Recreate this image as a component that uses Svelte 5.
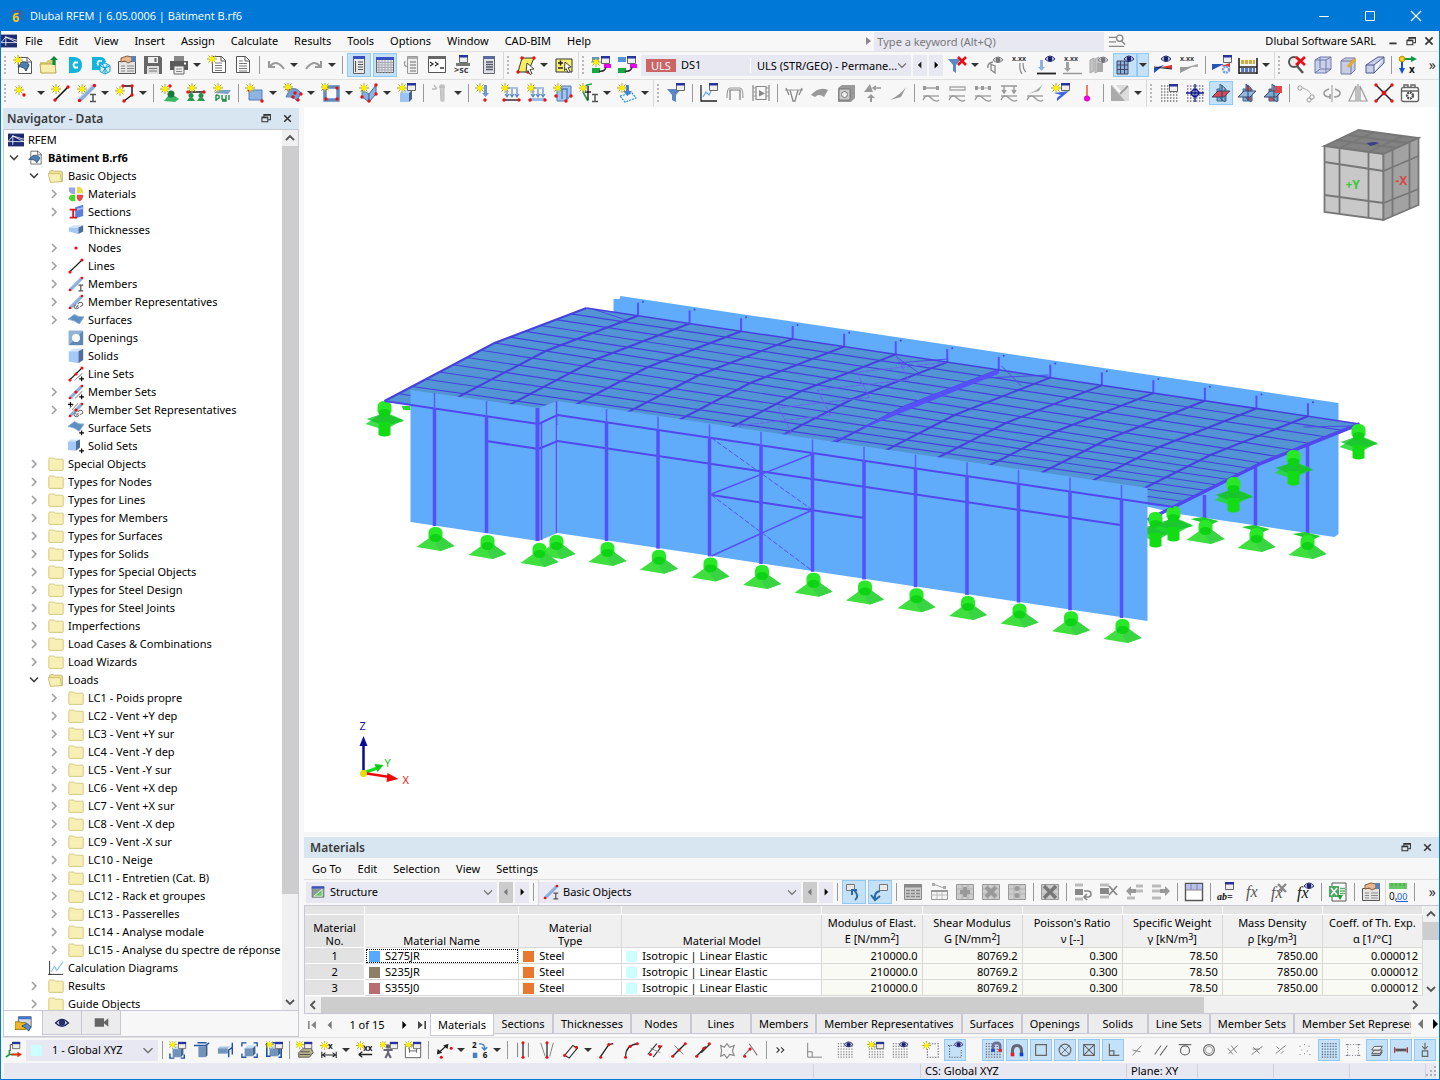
<script lang="ts">
  type Tool = { icon: string; active: boolean; drop: boolean };
  type TreeItem = { depth: number; icon: string; label: string; state?: 'open' | 'closed'; bold?: boolean };
  type Point = [number, number];

  // Small building blocks shared by the toolbar icons, all on a 20 x 20 grid
  const star = (x = 5, y = 5) =>
    `<g transform="translate(${x} ${y})"><path d="M-5 0H5M0-5V5M-3.5-3.5l7 7M3.5-3.5l-7 7" stroke="#a8a030" stroke-width="1"/><path d="M0-4 1-1.5 3.5-2.5 2 0 3.5 2.5 1 1.5 0 4-1 1.5-3.5 2.5-2 0-3.5-2.5-1-1.5Z" fill="#fff000"/><circle r="2" fill="#fff000"/></g>`;
  const dot = (x: number, y: number, r = 1.7) => `<circle cx="${x}" cy="${y}" r="${r}" fill="#e81018"/>`;
  const line = (d: string, color = '#222', width = 1.2) =>
    `<path d="${d}" fill="none" stroke="${color}" stroke-width="${width}"/>`;
  const fill = (d: string, color: string, stroke = 'none') => `<path d="${d}" fill="${color}" stroke="${stroke}"/>`;
  const win = (x = 11, y = 1) =>
    `<g transform="translate(${x} ${y})"><path d="M.5 .5h8v7h-8z" fill="#eee" stroke="#666"/><path d="M0 0h9v2.5H0z" fill="#26339c"/></g>`;
  const eye = (x = 13, y = 5, c = '#1c2470') =>
    `<g transform="translate(${x} ${y})"><path d="M-5 0Q0-6 5 0Q0 5-5 0Z" fill="#dde" stroke="${c}"/><circle r="2.4" fill="${c}"/></g>`;
  const text = (t: string, x: number, y: number, size = 7, color = '#444') =>
    `<text x="${x}" y="${y}" font-size="${size}" font-weight="700" font-family="Noto Sans, sans-serif" fill="${color}">${t}</text>`;
  const page = (x = 3, y = 2) => `<path d="M${x + 0.5} ${y + 0.5}h9l4 4v12h-13z" fill="#fff" stroke="#555"/>` + line(`M${x + 9} ${y}v5h5`, '#555', 1);
  const cube = (x: number, y: number, c = '#8fb4e8') =>
    `<g transform="translate(${x} ${y})"><path d="M0 4h9v9H0z" fill="${c}"/><path d="M0 4 3 1h9L9 4z" fill="#c4dcf8"/><path d="M9 4l3-3v9l-3 3z" fill="#44648f"/></g>`;
  const beam = line('M3 17 17 3', '#8aaedb', 4) + line('M2 16 16 2', '#b4cdee', 1) + dot(2.5, 17.5) + dot(17.5, 2.5);
  const ibeam = line('M13 11.5h6M13 18.5h6M16 11.5v7', '#555', 1.5);
  const wave = (c = '#888') => line('M2 13h16', c, 1.3) + line('M2 17Q5 10 10 15T18 17', c, 1.4);
  const dots = (c = '#667') => {
    let out = '';
    for (let y = 3; y < 19; y += 3) for (let x = 2; x < 19; x += 3) out += `M${x} ${y}h1.4`;
    return line(out, c, 1.4);
  };
  const frameWin = (c = '#fff') => `<path d="M1.5 2.5h17v15h-17z" fill="${c}" stroke="#666"/><path d="M1 2h18v3H1z" fill="#3a4fc0"/>`;
  const disabledTable = `<path d="M1.5 2.5h17v15h-17z" fill="#ccc" stroke="#999"/>` + line('M2 7h16M2 12h16M7 3v14M13 3v14', '#b4b4b4', 1);
  const planes = (flat: string, side: string, front: string) =>
    fill('M6 6h9v12H6z', front, '#3c6890') + fill('M9 1l5 4v14l-5-4z', side, '#3c6890') + fill('M1 14 7 8h12l-6 6z', flat, '#3c4870') + line('M11 2v16', '#26496e', 1);
  const chain = line('M10 17l3-3M12 12.5q4-4 6-1t-3 4M14 16q-3 4-5.500 1.500t2-4', '#666', 1.3);
  const plus = (x = 14, y = 13) => line(`M${x} ${y + 3}h6M${x + 3} ${y}v6`, '#000', 1.5);
  const greenBase = (x: number) => fill(`M${x} 18l2-3h4l2 3z`, '#2a9a4c') + `<circle cx="${x + 4}" cy="12.500" r="2.500" fill="#229048"/>`;

  const icons: Record<string, string> = {
    newModel: page(5, 2) + fill('M5 12 9 7q5-1 7 3l-3 6q-2-5-8-4z', '#4f7fae', '#27486b') + star(5, 5),
    open: fill('M1 7h6l2-2h8v13H1z', '#d8cc74') + fill('M1 9h15l1 9H2z', '#f8eeb0', '#b8a850') + fill('M15 1l4 4h-2.500v5h-3V5H11z', '#0b8a3c'),
    cloud: fill('M4 2h6q7 1 7 8t-7 8H4z', '#12b4dc') + line('M13 7.500H9.500Q7.500 10 9.500 12.500H13', '#fff', 1.8),
    cloudModel: fill('M1 2h8q5 0 6 5L9 10v5H1z', '#12b4dc') + line('M11 6H7.500q-2 2 0 4.500', '#fff', 1.6) + fill('M14 8l5 2.500v6L14 19l-5-2.500v-6z', '#d8f2fa', '#12a0d0') + line('M9 10.500l5 3 5-3M14 13v6M11.500 9.500l5 8M16.500 9.500l-5 8', '#12a0d0', 1),
    settings: `<path d="M1.500 6.500h17v12h-17z" fill="#e4e4e4" stroke="#555"/>` + line('M4 11h4M10 11h7M4 13.500h4M10 13.500h7M4 16h4M10 16h7', '#888', 1.2) + fill('M4 3l6-2 5 1v4l-4 2-3-2-4 1z', '#e8b890', '#8a5a3a') + fill('M14 1h5v6h-4z', '#5a80b8'),
    save: fill('M1 1h16l2 2v16H1z', '#666') + fill('M5 2h10v6H5z', '#eee') + fill('M4 11h12v8H4z', '#ddd') + line('M6 13.500h8M6 16h8', '#777', 1) + fill('M11.500 3h2v4h-2z', '#666'),
    print: fill('M5 1h10v5H5z', '#888') + fill('M1 6h18v9H1z', '#5a5a5a') + fill('M5 11h10v8H5z', '#eee', '#666') + line('M7 14h6M7 16.500h6', '#888', 1) + fill('M15 7.500h2v2h-2z', '#fff'),
    newReport: page(5, 1) + line('M8 8h7M8 10.500h7M8 13h7M8 15.500h7', '#777', 1) + star(5, 4),
    report: page(3, 1) + line('M6 6h4M6 8.500h8M6 11h8M6 13.500h8M6 16h8', '#777', 1),
    undo: line('M3 6v6h6M4 11q7-7 14 3', '#999', 2),
    redo: line('M17 6v6h-6M16 11Q9 4 2 14', '#999', 2),
    panelList: `<path d="M4.500 1.500h11v17h-11z" fill="#e8e8e8" stroke="#666"/><path d="M4 1h12v3H4z" fill="#3a4fc0"/>` + line('M9 7h5M9 9.500h5M9 12h5M9 14.500h5', '#555', 1.2) + line('M6.500 6v11', '#555', 1),
    panelTable: frameWin('#e4e6f0') + line('M4 5v13M7 5v13M10 5v13M13 5v13M16 5v13M2 7.500h16M2 10h16M2 12.500h16M2 15h16', '#a8a8b0', 1),
    panelGrey: `<path d="M6.500 1.500h10v17h-10z" fill="#eee" stroke="#999"/>` + line('M7 3h9M9 7h6M9 10h6M9 13h6M9 16h6M4 6q-2 5 3 6', '#999', 1.4),
    console: `<path d="M1.500 1.500h17v16h-17z" fill="#fff" stroke="#555"/><path d="M1 1h18v3H1z" fill="#666"/>` + line('M3 7l3 2-3 2M8 7l3 2-3 2M13 13h4', '#333', 1.4),
    script: win(6, 0) + `<path d="M3 8h14v3H3z" fill="#777"/>` + text('>sc', 1, 18, 9, '#444'),
    panelPlain: `<path d="M4.500 1.500h11v17h-11z" fill="#dde2ea" stroke="#666"/><path d="M4 1h12v3H4z" fill="#5a6a9a"/>` + line('M7 7h7M7 9.500h7M7 12h7M7 14.500h7', '#556', 1.4),
    selectArea: fill('M6 3h12l-6 14H2z', '#f4ee60', '#333') + dot(6, 3) + dot(18, 3) + dot(2, 17) + dot(12, 17) + fill('M11 8l7 6-4 .5 2 4-2 1-2-4-2 2z', '#fff', '#444'),
    selectBox: fill('M2 4h16v13H2z', '#f8f070', '#333') + line('M4 8h5M6.500 5.500v5M4 13h5', '#222', 1.5) + fill('M11 7l6 5-3 .5 2 4-2 1-2-4-1.500 2z', '#fff', '#444'),
    lcNew: fill('M1 2h7v5H1z', '#5590d8') + fill('M1 13h8v5H1z', '#18a840') + star(5, 7) + win(10, 1) + fill('M13 9h7v4h-7z', '#f000f0') + line('M8 16q6 1 7-4', '#333', 1.5),
    lcEdit: fill('M1 2h8v5H1z', '#5590d8') + fill('M1 13h8v5H1z', '#18a840') + win(10, 1) + fill('M13 9h7v4h-7z', '#f000f0') + line('M8 16q6 1 7-4', '#333', 1.5),
    filterX: fill('M1 4h13L9 10v8l-3-2v-6z', '#5b87c4') + line('M11 2l8 8M19 2l-8 8', '#e81018', 2.6),
    deformEye: line('M8 7Q2 8 3 13M5 9l5 2v7l-4-3v-5', '#888', 1.3) + eye(13, 5, '#777'),
    valuesWave: text('x.xx', 1, 6, 7) + line('M9 8q-1 7 2 11M12 8q0 7 3 9', '#888', 1.2),
    loadEye: fill('M3 5h3v7h2l-3.500 4L1 12h2z', '#8fb4e0') + line('M0 18.500h19', '#222', 1.8) + eye(13, 4),
    loadValues: text('x.xx', 1, 6, 7) + fill('M3 7h3v6h2l-3.500 4L1 13h2z', '#a0a0a0') + line('M0 18.500h19', '#999', 1.5),
    boxesEye: fill('M1 5l4-2v13l-4 2zM6 4l4-2v14l-4 2z', '#c4c4c4', '#aaa') + fill('M8 8h6v9H8z', '#aaa') + eye(14, 5, '#777'),
    meshEye: fill('M2 6h11v13H2z', '#88b4dc', '#446') + line('M2 10h11M2 14.500h11M5.500 6v13M9.500 6v13', '#446', 1) + eye(14, 4),
    resultEye: fill('M1 18v-5l10-3z', '#2050b0') + fill('M8 12l11-2v4z', '#e03028') + line('M1 12l18 2', '#223', 1) + eye(13, 4),
    resultValues: text('x.xx', 1, 6, 7) + fill('M1 18V12h12z', '#999') + fill('M8 12h11V9z', '#aaa'),
    resultGear: fill('M0 9h12l-12 6z', '#2454b4') + fill('M9 11l9-3v4z', '#e03028') + win(11, 0) + `<circle cx="14" cy="14.500" r="3" fill="#fff" stroke="#7a9ae0" stroke-width="2.500" stroke-dasharray="2 .8"/>`,
    abacus: line('M1 3v16M19 3v16M1 12h18M1 18h18', '#222', 1.6) + `<path d="M3 7h14" stroke="#c8b048" stroke-width="4" stroke-dasharray="3.200 .8"/><path d="M3 15h14" stroke="#5878c4" stroke-width="4" stroke-dasharray="3.200 .8"/>`,
    zoomX: `<circle cx="7" cy="7" r="5" fill="#eee" stroke="#555" stroke-width="2"/>` + line('M10 11l6 7', '#555', 2.5) + line('M9 2l9 8M18 2l-9 8', '#e81018', 2.8),
    wireCube: fill('M2 5l5-3h11v12l-5 4H2z', '#c8d0ec', '#7078a8') + line('M2 5h11v13M13 5l5-3M7 2v11M2 18l5-4h11', '#7078a8', 1),
    editCube: fill('M2 6l4-3h10v12l-4 4H2z', '#c8cce4', '#7078a8') + line('M2 6h10v13M12 6l4-3', '#7078a8', 1) + line('M9 12l7-8', '#e8a828', 3),
    perspective: fill('M1 10h8v8H1zM1 10 13 2h6L9 10M19 2v6L9 18', '#c8d0ec', '#505890'),
    viewX: line('M4 4h10', '#0a9a48', 2) + line('M4 4v10', '#1450e0', 2) + fill('M13 1l6 3-6 3z', '#0a9a48') + fill('M1 13h6l-3 6z', '#1450e0') + `<circle cx="4" cy="4" r="2.800" fill="#f8d020" stroke="#c80"/>` + text('x', 11, 18, 10, '#111'),
    more: line('M4 7l3 3-3 3M9 7l3 3-3 3', '#333', 1.2),

    node: star(6, 7) + dot(11, 12),
    line: line('M4 17 17 4', '#111', 1.6) + dot(4, 17) + dot(17, 4) + star(5, 6),
    member: beam + ibeam + star(5, 6),
    polyline: line('M8 3h9v9l-8 6', '#111', 1.4) + dot(8, 3) + dot(17, 3) + dot(17, 12) + dot(9, 18) + star(5, 8),
    nodeSupport: fill('M4 18l4-5h7l4 3-4 3z', '#38b860') + `<circle cx="11" cy="11" r="3.500" fill="#187838"/>` + dot(10, 3) + star(5, 6),
    lineSupport: greenBase(1) + greenBase(11) + line('M2 9h16', '#111', 1.4) + dot(2, 9) + dot(18, 9) + star(6, 5),
    surfaceSupport: fill('M2 10 6 7h13l-3 4z', '#7aa2cc') + line('M4 12v6M4 12q4 0 3 3l-3 2M10 12v4q4 2 4-1v-3M14 14v4h-4M17 12v5', '#229048', 1.4) + star(6, 5),
    surface: fill('M4 7h13v10H4z', '#8fb4e4', '#557fb4') + dot(4, 7) + dot(17, 18) + star(5, 5),
    surfaceCurved: fill('M3 14l4-8q7-2 11 4l-4 8q-4-5-11-4z', '#6f9fd0', '#557fb4') + dot(5, 6) + dot(12, 10) + dot(18, 11) + dot(10, 14) + dot(15, 17) + star(5, 4),
    opening: `<path d="M4 4h13v13H4z" fill="#fff" stroke="#5e8cc0" stroke-width="3.500"/>` + dot(5, 5) + dot(16, 5) + dot(5, 16) + dot(16, 16) + star(4, 4),
    solid: fill('M3 7l7 4v8l-7-5z', '#7fb0e0', '#557fb4') + fill('M10 11l7-9v9l-7 8z', '#8fb4e4', '#45658f') + dot(17, 2) + dot(10, 18) + dot(3, 14) + dot(17, 11) + star(5, 5),
    solidBox: cube(3, 6, '#9cc4f0') + win(10, 0) + star(5, 5),
    greyPen: fill('M10 2h4v16h-3z', '#ccc', '#bbb') + line('M4 2l3 4M2 6h4M9 4h6', '#bbb', 1.4),
    nodeLoad: fill('M9 2h3v8h2l-3.500 4L7 10h2z', '#6a98d8') + dot(10, 17) + star(5, 5),
    memberLoad: line('M2 5h15M6 6v7M11 6v7M16 6v7M4 11l2 3 2-3M9 11l2 3 2-3M14 11l2 3 2-3', '#5a88c8', 1.2) + line('M3 17h15', '#222', 1.4) + dot(3, 17) + dot(18, 17) + star(4, 5),
    lineLoad: line('M2 5h15M6 6v7M11 6v7M16 6v7M4 11l2 3 2-3M9 11l2 3 2-3M14 11l2 3 2-3', '#5a88c8', 1.2) + line('M3 16.500h15', '#9cbce8', 3) + dot(3, 17) + dot(18, 17) + star(4, 5),
    surfaceLoad: fill('M4 6l5-3h9v9l-5 6H4z', '#a4c4ec', '#4f7fb8') + line('M5 6h9v10M9 6v10', '#4478c4', 1.3) + dot(3, 13) + dot(13, 18) + dot(18, 13) + star(5, 5),
    imposed: line('M13 1Q2 2 5 11l4 7', '#10a040', 1.6) + line('M9 3v14M6 9h6', '#222', 1.4) + ibeam + star(4, 5),
    freeLoad: fill('M9 2h3v6h3l-4.500 5L6 8h3z', '#4a80d0') + `<path d="M3 13l12-3 4 5-11 4z" fill="none" stroke="#2090e0" stroke-width="1.200" stroke-dasharray="2 1"/>` + star(5, 5),
    filterWin: fill('M1 6h14l-5 6v7l-4-2v-5z', '#5b87c4') + win(10, 0),
    diagram: line('M2 2v16h16', '#222', 1.3) + line('M4 14l3-5 3 3 4-8', '#60a8e8', 1.2) + win(10, 0),
    frame: line('M5 17V7h10v10', '#777', 1.2) + line('M2 15Q2 5 5 5h10q3 0 3 10', '#999', 1.2),
    film: line('M2 2v16M18 2v16M5 3.500h10v13H5z', '#888', 1.2) + line('M2 5h3M2 9h3M2 13h3M15 5h3M15 9h3M15 13h3', '#999', 1.2) + fill('M8 7l6 3.500-6 3z', '#888'),
    moment: line('M1 7h18', '#999', 1) + line('M2 5l3 7M6 7l3 11h2l3-11M18 5l-3 7', '#888', 1.3),
    surfaceGrey: fill('M1 12Q9 3 18 7l-4 7Q9 10 5 14z', '#999'),
    stress: fill('M2 5l4-3h13v13l-4 4H2z', '#999') + fill('M3 6h11v11H3z', '#ccc', '#777') + `<circle cx="8.500" cy="11.500" r="3" fill="#eee" stroke="#777"/>`,
    reactions: fill('M2 9l6-8 3 8zM8 19v-4H5l4-4 4 4h-3v4z', '#999') + line('M12 5h7M14 3l-3 2 3 2', '#999', 1.4),
    slope: fill('M2 17Q12 12 18 4l-5 10z', '#999'),
    diagA: line('M2 5h16', '#999', 1.4) + wave('#999') + fill('M2 3h3v4H2zM15 3h3v4h-3z', '#999'),
    diagB: line('M3 4h15v3H3z', '#aaa', 1.4) + wave('#999'),
    diagC: line('M2 5h16', '#aaa', 1) + fill('M2 3h3v4H2zM8 3h3v4H8zM15 3h3v4h-3z', '#999') + wave('#999'),
    diagD: line('M2 3h16M5 3v6M15 3v6M3 7l2 3 2-3M13 7l2 3 2-3', '#999', 1.4) + wave('#999'),
    diagE: fill('M3 11Q12 8 18 1l-4 7z', '#aaa') + wave('#999'),
    resultNew: fill('M3 10l15-2-12 10q-1-4 4-6z', '#3c62e0') + win(10, 0) + star(5, 5),
    thermo: line('M10 2v12', '#f06030', 1.6) + `<circle cx="10" cy="15.500" r="3" fill="#f000d8"/>`,
    render: fill('M1 2h18v16H1z', '#dcdcdc') + fill('M1 2v16h14z', '#aaa') + line('M4 2l7 8 8-8', '#fff', 2) + line('M10 11l8-8', '#999', 2),
    gridWin: dots('#777') + win(10, 1),
    gridCenter: dots('#778') + `<circle cx="10" cy="10" r="3.500" fill="none" stroke="#101890" stroke-width="1.500"/>` + line('M10 1v18M1 10h18', '#101890', 1.3),
    planeXY: planes('#d84850', '#8fb8dc', '#7aa8d0'),
    planeYZ: planes('#8fb8dc', '#d84850', '#7aa8d0'),
    planeXZ: planes('#7aa8d0', '#8fb8dc', '#e04850') + fill('M12 3h7v7h-7z', '#e04850'),
    copyNode: line('M7 5q6 2 8 6', '#aaa', 1) + `<circle cx="4" cy="5" r="2.200" fill="none" stroke="#999"/><circle cx="16" cy="14" r="2.200" fill="none" stroke="#999"/><circle cx="13" cy="17" r="2" fill="none" stroke="#999"/>`,
    rotate: line('M10 2v17', '#999', 1) + line('M7 6Q1 8 2 11t6 3M13 6q6 2 5 5t-6 3M8 11v5', '#999', 1.5),
    mirror: line('M8 3v15H1zM12 3v15h7zM10 1v18', '#999', 1.2),
    cross: line('M2 2 18 18M18 2 2 18', '#222', 1.5) + dot(2, 2) + dot(18, 2) + dot(2, 18) + dot(18, 18) + dot(10, 10, 2.4),
    bagGear: `<rect x="1.500" y="4.500" width="17" height="14" rx="2" fill="#fff" stroke="#666" stroke-width="1.400"/>` + line('M2 8h16M4 4V2h4v2M11 4V2h4v2', '#666', 1.4) + `<circle cx="10" cy="12.500" r="3" fill="none" stroke="#555" stroke-width="2.400" stroke-dasharray="2 .7"/>`,

    syncView: `<path d="M2.500 2.500h8v6h-8z" fill="#e8e8e8" stroke="#777"/>` + line('M11 18q5-4-1-10M8 13V8h5', '#2a6aa8', 2),
    syncTable: `<path d="M9.500 2.500h8v6h-8z" fill="#e8e8e8" stroke="#777"/>` + line('M10 9q-6 1-5 8M1 13l4 5 5-4', '#2a6aa8', 2),
    tableRows: `<path d="M1.500 2.500h17v15h-17z" fill="#ccc" stroke="#888"/>` + line('M1 4h18', '#888', 3) + line('M3 8.500h4M8 8.500h4M13 8.500h4M3 11.500h4M8 11.500h4M13 11.500h4M3 14.500h4M8 14.500h4M13 14.500h4', '#888', 1.4),
    tableEdit: `<path d="M2.500 8.500h16v9h-16z" fill="#f4f4f4" stroke="#999"/>` + line('M2 13h16M8 9v8M13 9v8', '#bbb', 1) + line('M2 9h17', '#999', 2) + line('M4 2l11 4', '#aaa', 1.2) + fill('M3 1h3v3H3zM14 4h3v3h-3z', '#aaa'),
    tablePlus: disabledTable + line('M10 5v10M5 10h10', '#999', 4),
    tableCross: disabledTable + line('M5 5l10 10M15 5 5 15', '#999', 4),
    tableDots: disabledTable + `<circle cx="10" cy="6.500" r="2.500" fill="#999"/><circle cx="10" cy="13.500" r="2.500" fill="#999"/>`,
    clearTable: disabledTable + line('M4 4l12 12M16 4 4 16', '#777', 3.4),
    rowReturn: fill('M2 7h8v6H2z', '#888') + line('M2 3h8M2 17h8', '#bbb', 3) + line('M11 9h4q3 0 3 3t-3 3h-3M14 12l-3 3 3 3', '#888', 1.6),
    rowDelete: fill('M1 6h9v6H1z', '#888') + line('M1 3h9M1 15h9', '#bbb', 3) + line('M10 4l8 9M18 4l-8 9', '#888', 1.8),
    rowLeft: fill('M6 4 1 9l5 5v-3h5V7H6z', '#999') + line('M11 4h7M11 9h7M2 16h8', '#bbb', 3),
    rowRight: line('M1 4h9M1 9h9M1 16h9', '#bbb', 3) + fill('M14 4l5 5-5 5v-3H9V7h5z', '#999'),
    tableLayout: `<path d="M1.500 1.500h17v17h-17z" fill="#fff" stroke="#555" stroke-width="1.400"/><path d="M2 2h16v6H2z" fill="#b8c0f0"/>` + line('M2 8h16M7 2v6M13 2v6', '#888', 1),
    rename: win(8, 0) + `<text x="0" y="18" font-size="10" font-weight="700" font-style="italic" font-family="Liberation Serif, serif" fill="#111">ab=</text>`,
    fx: `<text x="3" y="15" font-size="16" font-style="italic" font-family="Liberation Serif, serif" fill="#555">fx</text>`,
    fxDelete: `<text x="2" y="16" font-size="16" font-style="italic" font-family="Liberation Serif, serif" fill="#555">fx</text>` + line('M9 2l8 8M17 2 9 10', '#888', 2.4),
    fxEye: `<text x="2" y="16" font-size="16" font-style="italic" font-family="Liberation Serif, serif" fill="#111">fx</text>` + eye(14, 4),
    excel: fill('M4 1h14v18H4z', '#fff', '#555') + fill('M1 4h10v11H1z', '#4aa860') + line('M3 6l6 7M9 6l-6 7', '#fff', 1.5) + line('M12 6.500h5M12 9h5M12 11.500h5', '#5cae6c', 1.5) + fill('M9 13h6l-3 5z', '#20a040'),
    decimals: fill('M1 1h18v6H1z', '#68c868') + line('M4 1v3M8 1v3M12 1v3M16 1v3', '#40a040', 1) + `<text x="1" y="18" font-size="10" font-family="Noto Sans, sans-serif" fill="#111">0,</text><text x="9" y="18" font-size="9" font-family="Noto Sans, sans-serif" fill="#2060d0">00</text>` + line('M8 19.500h12', '#2060d0', 1),

    csNew: win(9, 1) + line('M6 10v5h11M6 15l-4 3', '#18a048', 1.8) + line('M8 15h9', '#e03010', 2) + fill('M15 12l5 3-5 3z', '#e03010') + line('M7 4h3M7 4v7', '#666', 1.3),
    boxNew: cube(4, 5, '#6f93bb') + line('M1 14v5h5M13 19h4v-4', '#2050a0', 1.6) + star(4, 4) + win(10, 1),
    clipBox: fill('M6 6h8v12H6z', '#6f93bb') + fill('M14 6l2-2v12l-2 2z', '#3c5878') + line('M1 5h13l4-3M5 2h10', '#2454a4', 1.6),
    clipSide: fill('M1 8h11v6H1z', '#6f93bb') + fill('M1 8l2-2h12l-3 2z', '#a8c4e0') + line('M17 2v5l-4 3v8M17 7v8', '#2050a0', 1.6),
    moveBox: cube(4, 4, '#6f93bb') + line('M1 6V2h5M14 2h4v4M1 14v4h5M14 18h4v-4', '#2050a0', 1.5),
    rotateBox: cube(5, 4, '#6f93bb') + line('M5 3H2v14h4M15 18h3V6M8 2h9', '#2050a0', 1.8) + star(5, 4) + win(11, 1),
    guide: fill('M3 13l5-5h9l2 5-4 5H3z', '#b8b088', '#555') + line('M5 12h10M4 15h12', '#555', 1.2) + star(4, 4) + win(9, 1),
    dimension: line('M2 12v7M18 12v7M3 15.500h14M6 13l-3 2.500L6 18M14 13l3 2.500L14 18', '#222', 1.2) + text('x', 9, 9, 9, '#222') + star(5, 5),
    dimensionXX: line('M3 15h15M3 15l4-3M3 15l4 3', '#222', 1.4) + text('xx', 8, 11, 9, '#222') + star(5, 5),
    person: `<circle cx="9" cy="6" r="2.500" fill="#667"/>` + line('M4 10h10M9 9v6M9 13l-3 6M9 13l3 6', '#667', 2.4) + star(3, 4) + win(11, 1),
    section: `<path d="M1.500 5.500h17v13h-17z" fill="#fff" stroke="#555"/>` + line('M6 11h8M6 7v6M14 7v6', '#555', 1) + star(5, 4) + win(10, 1),

    snapNode: line('M4 13 13 5', '#222', 1.4) + fill('M2 15l1-6 5 4zM15 3l-1 6-5-4z', '#222') + dot(7, 18) + dot(18, 8),
    numbering: text('2', 1, 8, 9, '#111') + text('6', 13, 19, 9, '#111') + fill('M2 13h5v6H2z', '#4a80c0') + line('M9 3q7 0 6 6M12 7l3 3 3-3', '#4a80c0', 1.7),
    parallel: line('M4 2v16M16 2v16', '#777', 1) + line('M10 3v14', '#222', 1.4) + dot(10, 2) + dot(10, 18),
    splitLines: line('M3 2l5 15M17 2l-4 15', '#777', 1) + line('M10 2v15', '#222', 1.4) + dot(10, 2) + dot(10, 18),
    parallelogram: line('M3 16 12 5l5 3-9 11z', '#333', 1.3) + dot(3, 16) + dot(16, 7),
    tangent: line('M3 17 12 4l5-1', '#222', 1.5) + dot(3, 18) + dot(12, 4),
    arc: line('M4 17Q4 5 17 3', '#222', 1.3) + dot(4, 18) + dot(9, 6) + dot(17, 3),
    offsetLine: line('M2 15 12 3M8 18 18 5', '#333', 1.3) + line('M5 8l11 5', '#888', 1) + dot(5, 15) + dot(15, 6),
    crossLine: line('M3 17 17 3', '#222', 1.5) + line('M5 5l10 10', '#777', 1) + dot(3, 17) + dot(10, 10) + dot(17, 3),
    extendLine: line('M3 17 13 6M8 13l10-10', '#333', 1.6) + dot(3, 17) + dot(11, 8) + dot(17, 3),
    stars: line('M3 5l4 2 3-4 3 4 5-2-2 6 2 5-5-1-3 4-3-4-4 2 1-6z', '#888', 1.3),
    perpendicular: line('M2 16l6-6M8 3l9 13', '#777', 1.2) + dot(3, 17) + dot(9, 9),

    angle: line('M3 2v16h16M8 12v6M3 12h5', '#777', 1),
    gridEye: dots('#888') + eye(14, 4),
    gridNew: dots('#888') + win(10, 1) + star(5, 4),
    guideNew: `<path d="M8 3h10v15H6V9" fill="none" stroke="#667" stroke-width="1.200" stroke-dasharray="1.500 1.500"/>` + star(5, 5),
    guideEye: `<path d="M2 5h7M4 5v13h13v-8" fill="none" stroke="#667" stroke-width="1.200" stroke-dasharray="1.500 1.500"/>` + eye(14, 4),
    gridMagnet: dots('#667') + line('M10 11V6q0-4 4-4t4 4v5', '#707090', 3) + fill('M8 9h4v3H8z', '#1040d0') + fill('M16 9h4v3h-4z', '#e02020'),
    magnet: line('M5 16v-5q0-6 5-6t5 6v5', '#667', 3.4) + fill('M3 13h4v4H3z', '#e02020') + fill('M13 13h4v4h-4z', '#1040d0'),
    square: line('M4 4h12v12H4z', '#666', 1.3),
    circleX: `<circle cx="10" cy="10" r="6.500" fill="none" stroke="#666" stroke-width="1.300"/>` + line('M5 5l10 10M15 5 5 15', '#666', 1),
    squareX: line('M4 4h12v12H4zM4 4l12 12M16 4 4 16', '#666', 1.2),
    rightAngle: line('M6 3v13h11M6 11h5v5', '#666', 1.3),
    slash: line('M5 16 15 5M5 10l9 2', '#888', 1.1),
    slashes: line('M3 15 10 5M9 16l8-11', '#666', 1.2),
    tangentCircle: line('M3 4h14', '#666', 1.3) + `<circle cx="10" cy="10.500" r="5" fill="none" stroke="#666" stroke-width="1.300"/>`,
    hexCircle: `<circle cx="10" cy="10" r="6" fill="none" stroke="#666" stroke-width="1.300"/><circle cx="10" cy="10" r="4" fill="none" stroke="#999"/>`,
    hatchA: line('M4 8l6 7M8 5l6 8M5 14l10-9', '#777', 1),
    hatchB: line('M4 15 16 6M6 7l7 7M5 9h8', '#777', 1),
    hatchC: line('M5 6l3 3M4 14l11-9M10 14l3-3', '#777', 1),
    scatter: line('M4 6h1M9 4h1M14 6h1M6 10h1M12 11h1M4 15h1M9 14h1M15 15h1', '#888', 1.3),
    dotGrid: dots('#567'),
    dotFrame: `<path d="M4 4h12v12H4z" fill="none" stroke="#667" stroke-dasharray="1 2"/>` + line('M2 4h3M15 4h3M2 16h3M15 16h3', '#667', 1),
    layers: fill('M4 14l3-4h9l-3 4z', '#ddd', '#555') + fill('M4 10l3-4h9l-3 4z', '#eee', '#555') + line('M4 16h9l3-4', '#555', 1.2),
    barbell: line('M4 10h12', '#555', 3) + line('M3 7v6M17 7v6', '#c02020', 1.4),
    pinDown: line('M10 2v6M7 6l3 3 3-3M7 11h6v6H7z', '#666', 1.3),

    rfem: fill('M0 2h20v16H0z', '#1c2a72') + line('M0 12h20M6 4v12M0 12 6 5l14 7M6 5 20 9', '#fff', 1),
    fileModel: page(3, 1) + fill('M1 12 6 7q6-2 9 3l-4 6q-2-5-10-4z', '#4f7fae', '#27486b'),
    folder: fill('M1 4q0-1.500 1-1.500h5q1 0 2 1.500h9q1 0 1 1v12q0 1-1 1H2q-1 0-1-1z', '#f8efb4', '#cabf70'),
    folderOpen: fill('M2 4q3-2 6 0h9l1 1v12H3z', '#f2e49a', '#b8ac58') + fill('M0 7h15l2 10-14 1z', '#f8efb4', '#c4b864'),
    materials: fill('M1 2h8v8H6q-5-1-5-5z', '#9aa4e8') + fill('M11 1h3q5 1 5 8h-8z', '#e8dc50') + fill('M1 16q0-5 5-5h3v8H4z', '#48d828') + fill('M11 11h8q0 6-4 8-4-1-4-5z', '#e84848'),
    sections: fill('M9 4l10-3v14l-10 3z', '#5c80d8') + line('M11 7l8-2', '#a8c0f0', 2) + line('M2 7h9M2 17h9M6.500 7v10', '#d81820', 2.4),
    thickness: fill('M1 7h12v8L1 12z', '#a4c8f4') + fill('M1 7l6-3h12l-6 3z', '#cfe2fa') + fill('M13 7l6-3v8l-6 3z', '#4f6f9c'),
    nodes: dot(10, 10, 2),
    lines: line('M2.500 17 17 3', '#111', 1.6) + dot(2.5, 17.5, 2) + dot(17.5, 2.5, 2),
    members: beam + ibeam,
    memberReps: beam + chain,
    surfaces: fill('M0 9 8 3q5 4 12 3l-6 9q-6-5-14-6z', '#5f8fc0', '#7ba4cc'),
    openings: fill('M1 1h18v18H1z', '#5f87b4') + fill('M1 1h18L1 19z', '#8fb2d8') + `<circle cx="10" cy="10" r="5" fill="#fff"/>`,
    solids: fill('M1 4h12v15L1 17z', '#a4c8f8') + fill('M1 4l6-3h12l-6 3z', '#cfe2fa') + fill('M13 4l6-3v14l-6 4z', '#4f6f9c'),
    lineSets: line('M2.500 17 17 3', '#111', 1.6) + line('M8 18l9-8M12 15l6-6', '#999', 1.2) + dot(2.5, 17.5, 2) + dot(10, 10, 2) + dot(17.5, 2.5, 2) + plus(),
    memberSets: beam + line('M9 18l9-9', '#999', 1.4) + dot(10, 10, 2) + plus(),
    memberSetReps: beam + chain + dot(10, 10, 2) + line('M2 8l5-5M5 10 13 1', '#888', 1.2) + line('M0 3h6M3 0v6', '#000', 1.4),
    surfaceSets: fill('M0 8 8 2q5 4 12 3l-6 9q-6-5-14-6z', '#5f8fc0', '#7ba4cc') + plus(),
    solidSets: fill('M0 4h10v12L0 15z', '#a4c8f8') + fill('M0 4l4-2h11l-5 2z', '#cfe2fa') + fill('M10 4l5-2v10l-5 4z', '#4f6f9c') + plus(),
    calcDiagram: line('M2 1v17h17M0 18h4', '#333', 1.2) + line('M4 15l4-7 3 5 8-11', '#88c4f0', 1.4),
    navData: fill('M4 2h15v12H4z', '#d8d8e0', '#556') + fill('M4 2h15v3H4z', '#3c78d0') + fill('M0 8h6l1 1h6v8H0z', '#f0b828', '#907010') + fill('M8 13l6-3 5 4-3 5q-2-4-8-6z', '#5a90c8', '#27486b'),
    eyeTab: `<path d="M2 10Q10 1 18 10Q10 18 2 10Z" fill="#e4e4f0" stroke="#1c2460" stroke-width="1.600"/><circle cx="10" cy="9.500" r="4" fill="#26306c"/>`,
    camera: fill('M2 5h11v10H2z', '#666') + fill('M13 9l5-4v10l-5-4z', '#666'),
    structure: frameWin('#8a9a94') + fill('M4 16h12V6z', '#68c868', '#fff'),
    appLogo: line('M2 6q8-6 16 0M4 10q7-8 14 0M8 4l10 12', '#44648f', 2) + text('6', 4, 17, 15, '#f8c818'),
    search: line('M1 6h8M1 11h8M1 16h17', '#888', 1.4) + `<circle cx="13" cy="7" r="3.500" fill="none" stroke="#888" stroke-width="1.500"/>` + line('M15 10l4 4', '#888', 1.6),
    chevron: line('M5 8l5 5 5-5', '#666', 1.4),
    prev: fill('M12 5v10l-5-5z', '#222'),
    prevGrey: fill('M12 5v10l-5-5z', '#777'),
    next: fill('M8 5v10l5-5z', '#000'),
    restore: line('M3 8h9v7H3zM6 8V4h10v8h-4', '#333', 1.6) + line('M3 8.500h9M6 4.500h10', '#333', 2.4),
    close: line('M4 4l12 12M16 4 4 16', '#333', 2.8),
    minimize: line('M4 14h12', '#333', 3),
    first: fill('M5 5h2v10H5zM15 5v10l-6-5z', '#888'),
    last: fill('M13 5h2v10h-2zM5 5v10l6-5z', '#444'),
  };

  // '>' adds a drop-down arrow, '!' marks a pressed button, '|' is a separator
  function parse(spec: string): Tool[] {
    return spec.split(' ').map((token) => ({
      icon: token.replace(/[>!]/g, ''),
      active: token.includes('!'),
      drop: token.includes('>'),
    }));
  }

  const fileTools = parse('newModel open cloud cloudModel settings save print> newReport report | undo> redo> | panelList! panelTable! panelGrey console script panelPlain');
  const selectTools = parse('selectArea> selectBox');
  const caseTools = parse('lcNew lcEdit');
  const resultTools = parse('filterX> deformEye valuesWave loadEye loadValues boxesEye meshEye!> resultEye resultValues | resultGear abacus>');
  const viewTools = parse('zoomX wireCube editCube perspective | viewX');
  const insertTools = parse('node> line member> polyline> | nodeSupport lineSupport surfaceSupport | surface> surfaceCurved> opening> solid> solidBox | greyPen> | nodeLoad memberLoad lineLoad surfaceLoad imposed> freeLoad>');
  const diagramTools = parse('filterWin | diagram frame film | moment surfaceGrey stress reactions slope | diagA diagB diagC diagD diagE resultNew thermo | render>');
  const planeTools = parse('gridWin gridCenter planeXY! planeYZ planeXZ | copyNode rotate mirror cross bagGear');
  const tableTools = parse('| syncView! syncTable! | tableRows tableEdit tablePlus tableCross tableDots | clearTable | rowReturn rowDelete rowLeft rowRight | tableLayout | rename fx fxDelete fxEye | excel | settings');
  const decimalTools = parse('decimals |');
  const boxTools = parse('| boxNew clipBox clipSide moveBox rotateBox | guide dimension> dimensionXX person section | snapNode> numbering> | parallel splitLines parallelogram> tangent arc offsetLine crossLine extendLine stars perpendicular | more');
  const snapTools = parse('angle _ gridEye _ gridNew gridEye _ guideNew guideEye! _ _ gridMagnet! magnet! square! circleX! squareX! rightAngle! slash slashes tangentCircle hexCircle hatchA hatchB hatchC scatter dotGrid! dotFrame layers! barbell! pinDown!');

  const menus = ['File', 'Edit', 'View', 'Insert', 'Assign', 'Calculate', 'Results', 'Tools', 'Options', 'Window', 'CAD-BIM', 'Help'];
  const tableMenus = ['Go To', 'Edit', 'Selection', 'View', 'Settings'];

  const basicObjects: [string, string, boolean][] = [
    ['materials', 'Materials', true],
    ['sections', 'Sections', true],
    ['thickness', 'Thicknesses', false],
    ['nodes', 'Nodes', true],
    ['lines', 'Lines', true],
    ['members', 'Members', true],
    ['memberReps', 'Member Representatives', true],
    ['surfaces', 'Surfaces', true],
    ['openings', 'Openings', false],
    ['solids', 'Solids', false],
    ['lineSets', 'Line Sets', false],
    ['memberSets', 'Member Sets', true],
    ['memberSetReps', 'Member Set Representatives', true],
    ['surfaceSets', 'Surface Sets', false],
    ['solidSets', 'Solid Sets', false],
  ];
  const folders = [
    'Special Objects', 'Types for Nodes', 'Types for Lines', 'Types for Members', 'Types for Surfaces', 'Types for Solids',
    'Types for Special Objects', 'Types for Steel Design', 'Types for Steel Joints', 'Imperfections',
    'Load Cases & Combinations', 'Load Wizards',
  ];
  const loadCases = [
    'Poids propre', 'Vent +Y dep', 'Vent +Y sur', 'Vent -Y dep', 'Vent -Y sur', 'Vent +X dep', 'Vent +X sur', 'Vent -X dep',
    'Vent -X sur', 'Neige', 'Entretien (Cat. B)', 'Rack et groupes', 'Passerelles', 'Analyse modale', 'Analyse du spectre de réponse',
  ];
  const folder = (label: string, depth = 2): TreeItem => ({ depth, icon: 'folder', label, state: 'closed' });

  const tree: TreeItem[] = [
    { depth: 0, icon: 'rfem', label: 'RFEM' },
    { depth: 1, icon: 'fileModel', label: 'Bâtiment B.rf6', state: 'open', bold: true },
    { depth: 2, icon: 'folderOpen', label: 'Basic Objects', state: 'open' },
    ...basicObjects.map(([icon, label, more]): TreeItem => ({ depth: 3, icon, label, state: more ? 'closed' : undefined })),
    ...folders.map((label) => folder(label)),
    { depth: 2, icon: 'folderOpen', label: 'Loads', state: 'open' },
    ...loadCases.map((label, i) => folder(`LC${i + 1} - ${label}`, 3)),
    { depth: 2, icon: 'calcDiagram', label: 'Calculation Diagrams' },
    folder('Results'),
    folder('Guide Objects'),
  ];

  const materials = [
    { name: 'S275JR', color: '#55a9ff' },
    { name: 'S235JR', color: '#8f7e66' },
    { name: 'S355J0', color: '#b96d70' },
  ];
  const values = ['210000.0', '80769.2', '0.300', '78.50', '7850.00', '0.000012'];
  const valueHeads = [
    ['Modulus of Elast.', 'E [N/mm', '2', ']'],
    ['Shear Modulus', 'G [N/mm', '2', ']'],
    ["Poisson's Ratio", 'ν [--]', '', ''],
    ['Specific Weight', 'γ [kN/m', '3', ']'],
    ['Mass Density', 'ρ [kg/m', '3', ']'],
    ['Coeff. of Th. Exp.', 'α [1/°C]', '', ''],
  ];
  const tableTabs = [
    'Materials', 'Sections', 'Thicknesses', 'Nodes', 'Lines', 'Members', 'Member Representatives', 'Surfaces', 'Openings',
    'Solids', 'Line Sets', 'Member Sets', 'Member Set Representatives',
  ];
  let activeTab = $state('Materials');

  // Hall geometry: the roof runs over 15 bays between a back edge, a ridge kink and a front eave
  const mix = (a: Point, b: Point, t: number): Point => [a[0] + (b[0] - a[0]) * t, a[1] + (b[1] - a[1]) * t];
  const back: [Point, Point] = [[586, 308], [1359, 424]];
  const kink: [Point, Point] = [[494, 343], [1261, 463]];
  const eave: [Point, Point] = [[384, 401], [1173, 507]];
  const frames = Array.from({ length: 14 }, (_, i) => {
    const t = (i + 1) / 15;
    return { b: mix(...back, t), k: mix(...kink, t), e: mix(...eave, t) };
  });
  const purlins = [
    ...[1, 2, 3, 4, 5, 6].map((i) => [mix(back[0], kink[0], i / 6), mix(back[1], kink[1], i / 6)]),
    ...[1, 2, 3, 4, 5, 6, 7, 8].map((i) => [mix(kink[0], eave[0], i / 8), mix(kink[1], eave[1], i / 8)]),
  ];
  const bracing = Array.from({ length: 5 }, (_, j) => {
    const [p, q] = [frames[5], frames[6]];
    const a = mix(p.b, p.e, j / 5);
    const b = mix(q.b, q.e, (j + 1) / 5);
    const c = mix(q.b, q.e, j / 5);
    const d = mix(p.b, p.e, (j + 1) / 5);
    return `M${a}L${b}M${c}L${d}`;
  });
  // x, wall top, eave beam and wall bottom of every front column
  const leftColumns = [[434, 393, 408, 526], [486, 401, 416, 533]];
  const mainColumns = Array.from({ length: 11 }, (_, i) => {
    const x = 606 + i * 51.5;
    return [x, 409 + i * 7.6, 423 + i * 7.7, 541 + i * 7.7];
  });
  const supports: Point[] = [
    [435, 532], [487, 540], [556, 540], [539, 548],
    ...mainColumns.map(([x, , , y]): Point => [x + 1, y + 6]),
  ];
  const backSupports: Point[] = [[1205, 525], [1256, 533], [1307, 540]];
  const hangers: Point[] = [[384, 407], [1155, 518], [1173, 512], [1233, 483], [1293, 456], [1358, 430]];
</script>

{#snippet icon(name: string, size = 20)}
  <svg viewBox="0 0 20 20" width={size} height={size} fill="none" aria-hidden="true">{@html icons[name]}</svg>
{/snippet}

{#snippet tools(items: Tool[])}
  {#each items as tool}
    {#if tool.icon === '|'}
      <span class="sep"></span>
    {:else if tool.icon === '_'}
      <span class="space"></span>
    {:else}
      <span class="tool" class:active={tool.active}>
        <button aria-label={tool.icon}>{@render icon(tool.icon)}</button>
        {#if tool.drop}
          <button class="drop" aria-label="{tool.icon} options"></button>
        {/if}
      </span>
    {/if}
  {/each}
{/snippet}

{#snippet support(x: number, y: number)}
  <g transform="translate({x} {y})">
    <path d="M-19 15 -5 5 5 4 19 14 5 19Z" fill="#3fdf3f" />
    <path d="M5 4 19 14 5 19 0 12Z" fill="#38d444" />
    <path d="M-7 0Q-6-5 0-5T7 0V6Q0 11-7 6Z" fill="#28e828" />
    <ellipse cy="6" rx="6" ry="4" fill="#0cd414" />
  </g>
{/snippet}

{#snippet hanger(x: number, y: number)}
  <g transform="translate({x} {y})">
    <path d="M-19 17 -5 8 5 7 19 13 0 23Z" fill="#20d830" opacity="0.85" />
    <path d="M-18 12 0 6 20 14 0 19Z" fill="#14c028" opacity="0.8" />
    <path d="M-6 15H6V28Q0 31-6 28Z" fill="#14dc14" />
    <path d="M-7-1Q-6-6 0-6T7-1V5Q0 10-7 5Z" fill="#28e828" />
    <ellipse cy="6" rx="6" ry="4" fill="#0cd414" />
  </g>
{/snippet}

<div class="window">
  <header class="titlebar">
    {@render icon('appLogo', 16)}
    <span class="title">Dlubal RFEM | 6.05.0006 | Bâtiment B.rf6</span>
    <button aria-label="Minimize"><svg viewBox="0 0 12 12" width="12" height="12"><path d="M1 6.500h10" stroke="#fff" /></svg></button>
    <button aria-label="Maximize"><svg viewBox="0 0 12 12" width="12" height="12"><path d="M1.500 1.500h9v9h-9z" fill="none" stroke="#fff" /></svg></button>
    <button aria-label="Close"><svg viewBox="0 0 12 12" width="12" height="12"><path d="M1 1l10 10M11 1 1 11" stroke="#fff" stroke-width="1.200" /></svg></button>
  </header>

  <nav class="menubar">
    {@render icon('rfem', 16)}
    {#each menus as menu}
      <button class="menu">{menu}</button>
    {/each}
    <div class="search">
      <span class="triangle"></span>
      <input aria-label="Keyword search" placeholder="Type a keyword (Alt+Q)" />
      {@render icon('search', 18)}
    </div>
    <span class="company">Dlubal Software SARL</span>
    <button class="mdi" aria-label="Minimize model">{@render icon('minimize', 12)}</button>
    <button class="mdi" aria-label="Restore model">{@render icon('restore', 13)}</button>
    <button class="mdi" aria-label="Close model">{@render icon('close', 12)}</button>
  </nav>

  <div class="toolbar">
    <div class="group"><span class="handle"></span>{@render tools(fileTools)}</div>
    <div class="group"><span class="handle"></span>{@render tools(selectTools)}</div>
    <div class="group">
      <span class="handle"></span>
      {@render tools(caseTools)}
      <div class="combo case">
        <span class="badge">ULS</span>
        <span class="ds">DS1</span>
        <select aria-label="Design situation"><option>ULS (STR/GEO) - Permane...</option></select>
        {@render icon('chevron', 16)}
      </div>
      <button class="step" aria-label="Previous design situation">{@render icon('prev', 14)}</button>
      <button class="step" aria-label="Next design situation">{@render icon('next', 14)}</button>
      {@render tools(resultTools)}
    </div>
    <div class="group last">
      <span class="handle"></span>
      {@render tools(viewTools)}
      <button class="overflow" aria-label="More tools">»</button>
    </div>
  </div>

  <div class="toolbar">
    <div class="group"><span class="handle"></span>{@render tools(insertTools)}</div>
    <div class="group"><span class="handle"></span>{@render tools(diagramTools)}</div>
    <div class="group last"><span class="handle"></span>{@render tools(planeTools)}</div>
  </div>

  <div class="workspace">
    <aside class="navigator">
      <div class="panel-head">
        <h2>Navigator - Data</h2>
        <button aria-label="Float navigator">{@render icon('restore', 13)}</button>
        <button aria-label="Close navigator">{@render icon('close', 11)}</button>
      </div>
      <div class="tree-box">
        <ul>
          {#each tree as item}
            <li class:bold={item.bold} class:root={item.depth === 0} style="padding-left: {Math.max(0, item.depth - 1) * 20}px">
              {#if item.depth > 0}
                <span class="twist {item.state ?? ''}">
                  {#if item.state}
                    <svg viewBox="0 0 12 12" width="12" height="12">
                      <path d={item.state === 'open' ? 'M2 3.500 6 7.500 10 3.500' : 'M4 2 8 6 4 10'} fill="none" />
                    </svg>
                  {/if}
                </span>
              {/if}
              {@render icon(item.icon, 16)}
              <span>{item.label}</span>
            </li>
          {/each}
        </ul>
        <div class="vscroll">
          <span><svg viewBox="0 0 10 10" width="10" height="10"><path d="M1 7l4-4 4 4" /></svg></span>
          <div class="thumb"></div>
          <span class="end"><svg viewBox="0 0 10 10" width="10" height="10"><path d="M1 3l4 4 4-4" /></svg></span>
        </div>
      </div>
      <div class="nav-tabs">
        <button class="on" aria-label="Data">{@render icon('navData', 17)}</button>
        <button aria-label="Display">{@render icon('eyeTab', 16)}</button>
        <button aria-label="Views">{@render icon('camera', 17)}</button>
      </div>
    </aside>

    <main>
      <div class="viewport">
        <svg viewBox="304 107 1134 725" aria-label="3D model of the hall">
          <!-- rear wall -->
          <path d="M613 299h6l1-3L1338 403V534L1334 537 613 431Z" fill="#60acfa" />
          {#each [[1204, 495, 521], [1255, 467, 529], [1307, 444, 537]] as [x, top, bottom]}
            <path d="M{x} {top}V{bottom}" stroke="#5550fa" stroke-width="3.500" />
          {/each}
          <path d="M1140 505 1174 513 1205 521 1110 540Z" fill="#fff" />

          <!-- roof -->
          <path d="M{eave[0]}L{kink[0]}L{back[0]}L{back[1]}L{kink[1]}L{eave[1]}L1140 504Z" fill="#5294d4" />
          {#each purlins as [a, b]}
            <path d="M{a}L{b}" stroke="#4640dc" stroke-width="1.200" />
          {/each}
          {#each frames as f, i}
            <path d="M{f.b}L{f.k}L{f.e}" fill="none" stroke="#4640dc" stroke-width="2" />
            <path d="M{f.b[0]} {f.b[1] - 13}v13" stroke="#5550fa" stroke-width="2" />
            <circle cx={f.b[0] + 5} cy={f.b[1] - 14} r="1" fill="#4640dc" />
            {#if i === 7}
              <path
                d="M{f.b[0]} {f.b[1] - 1}L{f.k[0]} {f.k[1] - 1}L{f.e[0]} {f.e[1]}L{f.e[0] - 14} {f.e[1]}L{f.k[0]} {f.k[1] + 5}L{f.b[0]} {f.b[1] + 4}Z"
                fill="#5550fa"
              />
            {/if}
          {/each}
          {#each bracing as d}
            <path {d} fill="none" stroke="#6a60f0" stroke-dasharray="5 1" stroke-width="1" />
          {/each}
          <path d="M592 309 626 320M1001 366l20 20M985 378l63-3M896 357l24 17M896 363l51-4M1303 427l50-1" fill="none" stroke="#4f48e8" />
          <path d="M{back[0]}L{back[1]}" stroke="#4640dc" stroke-width="1.500" />
          <path d="M{eave[0]}L{kink[0]}L{back[0]}" fill="none" stroke="#4640dc" stroke-width="2" />
          <path d="M{back[1]}L{kink[1]}L{eave[1]}L1147 520" fill="none" stroke="#5048ec" stroke-width="3.500" />

          <!-- supports behind the front wall -->
          {#each backSupports as [x, y]}
            <path d="M{x - 15} {y - 6}l12-2 16 4-8 4Z" fill="#22cc2c" />
            {@render support(x, y)}
          {/each}
          {#each hangers as [x, y]}
            {@render hanger(x, y)}
          {/each}
          <path d="M401 406h9v4h-7z" fill="#28d828" />

          <!-- front wall -->
          <path d="M410 390 538 408V541L410 522Z" fill="#60acfa" />
          <path d="M538 408 557 401V533L538 541Z" fill="#68aef6" />
          <path d="M557 401 1147 488V621L557 533Z" fill="#60acfa" />
          <path d="M384 401 538 424 557 415 1173 507" fill="none" stroke="#5048ec" stroke-width="2" />
          <path d="M486 441 538 449 557 441 1120 525M711 495 864 518" fill="none" stroke="#5048ec" stroke-width="2" />
          <path d="M711 494 812 454M711 556 812 510" stroke="#5550fa" stroke-width="1.500" />
          <path d="M711 438 812 510M711 495 812 571" stroke="#5550fa" stroke-dasharray="5 2" />
          {#each [...leftColumns, ...mainColumns] as [x, top, beam, bottom]}
            <path d="M{x} {top}V{beam}" stroke="#5a5cf8" stroke-width="1.500" />
            <path d="M{x} {beam}V{bottom}" stroke="#5550fa" stroke-width="3.500" />
          {/each}
          <path d="M537 408V541" stroke="#5550fa" stroke-width="4" />
          <path d="M541 423V540M556 401V533" stroke="#5550fa" stroke-width="1.500" />
          {#each supports as [x, y]}
            {@render support(x, y)}
          {/each}

          <!-- axis cross -->
          <path d="M363 773V745" stroke="#0a0a98" stroke-width="2.500" />
          <path d="M363 736l4 10h-8z" fill="#0a0a98" />
          <path d="M363 773 377 768" stroke="#10e010" stroke-width="3" />
          <path d="M374 764 383 765 377 772z" fill="#10c818" />
          <path d="M363 773 389 777" stroke="#f00808" stroke-width="2.500" />
          <path d="M387 773l11 6-12 3z" fill="#f00808" />
          <circle cx="363" cy="773.500" r="3.500" fill="#e8dc10" />
          <g class="axis">
            <text x="359" y="730" fill="#1a1a90">Z</text>
            <text x="384" y="767" fill="#10c818">Y</text>
            <text x="402" y="784" fill="#f01010">X</text>
          </g>

          <!-- view cube -->
          <g class="cube">
            <path d="M1324 146 1358 130 1418 138 1383 154Z" fill="#828282" />
            <path d="M1324 146 1383 154V220L1324 212Z" fill="#c8c8c8" />
            <path d="M1383 154 1418 138V205L1383 220Z" fill="#a2a2a2" />
            <path d="M1339 148V214M1368 152V218M1324 162 1383 171M1324 195 1383 203M1392 150V216M1409 142V209M1383 171 1418 156M1383 203 1418 189M1339 148 1374 132M1368 152 1402 136M1336 140 1397 148M1347 135 1407 143" />
            <path d="M1366 143l8-1 5 1-9 3z" fill="#3c3c88" stroke="none" />
            <text x="1345" y="189" fill="#38c838">+Y</text>
            <text x="1395" y="185" fill="#d84848">-X</text>
          </g>
        </svg>
      </div>

      <section class="materials">
        <div class="panel-head">
          <h2>Materials</h2>
          <button aria-label="Float table">{@render icon('restore', 13)}</button>
          <button aria-label="Close table">{@render icon('close', 11)}</button>
        </div>
        <nav class="table-menu">
          {#each tableMenus as menu}
            <button class="menu">{menu}</button>
          {/each}
        </nav>
        <div class="toolbar table-bar">
          <div class="group">
            <div class="combo structure">
              {@render icon('structure', 14)}
              <select aria-label="Table group"><option>Structure</option></select>
              {@render icon('chevron', 16)}
            </div>
            <button class="step off" aria-label="Previous group">{@render icon('prevGrey', 14)}</button>
            <button class="step" aria-label="Next group">{@render icon('next', 14)}</button>
            <span class="sep"></span>
          </div>
          <div class="group">
            <div class="combo objects">
              {@render icon('members', 16)}
              <select aria-label="Table category"><option>Basic Objects</option></select>
              {@render icon('chevron', 16)}
            </div>
            <button class="step off" aria-label="Previous category">{@render icon('prevGrey', 14)}</button>
            <button class="step" aria-label="Next category">{@render icon('next', 14)}</button>
            {@render tools(tableTools)}
          </div>
          <div class="group last">
            {@render tools(decimalTools)}
            <button class="overflow" aria-label="More table tools">»</button>
          </div>
        </div>

        <div class="table-box">
          <div class="table-clip">
            <table>
              <colgroup>
                <col class="c-no" /><col class="c-name" /><col class="c-type" /><col class="c-model" />
                {#each values as _}<col class="c-val" />{/each}
              </colgroup>
              <thead>
                <tr class="strip">
                  <td></td><td></td><td></td><td></td>
                  {#each values as _}<td></td>{/each}
                </tr>
                <tr class="heads">
                  <th class="no">Material<br />No.</th>
                  <th>Material Name</th>
                  <th>Material<br />Type</th>
                  <th>Material Model</th>
                  {#each valueHeads as [title, unit, power, close]}
                    <th class="unit">{title}<br />{unit}{#if power}<sup>{power}</sup>{/if}{close}</th>
                  {/each}
                </tr>
              </thead>
              <tbody>
                {#each materials as material, i}
                  <tr>
                    <th class="no">{i + 1}</th>
                    <td class:focused={i === 0}><span class="swatch" style="background: {material.color}"></span>{material.name}</td>
                    <td><span class="swatch steel"></span>Steel</td>
                    <td><span class="swatch model"></span>Isotropic | Linear Elastic</td>
                    {#each values as value}<td class="num">{value}</td>{/each}
                  </tr>
                {/each}
              </tbody>
            </table>
            <div class="hscroll">
              <span><svg viewBox="0 0 10 10" width="10" height="10"><path d="M7 1 3 5l4 4" /></svg></span>
              <div class="thumb"></div>
              <span class="end"><svg viewBox="0 0 10 10" width="10" height="10"><path d="M3 1l4 4-4 4" /></svg></span>
            </div>
          </div>
          <div class="vscroll">
            <span><svg viewBox="0 0 10 10" width="10" height="10"><path d="M1 7l4-4 4 4" /></svg></span>
            <div class="thumb"></div>
            <span class="end"><svg viewBox="0 0 10 10" width="10" height="10"><path d="M1 3l4 4 4-4" /></svg></span>
          </div>
        </div>

        <div class="table-tabs">
          <div class="pager">
            <button aria-label="First table">{@render icon('first', 16)}</button>
            <button aria-label="Previous table">{@render icon('prevGrey', 16)}</button>
            <span>1 of 15</span>
            <button aria-label="Next table">{@render icon('next', 16)}</button>
            <button aria-label="Last table">{@render icon('last', 16)}</button>
          </div>
          <div class="tabs">
            {#each tableTabs as tab}
              <button class:on={tab === activeTab} onclick={() => (activeTab = tab)}>{tab}</button>
            {/each}
          </div>
          <button class="tab-scroll" aria-label="Scroll tabs left">{@render icon('prevGrey', 20)}</button>
          <button class="tab-scroll" aria-label="Scroll tabs right">{@render icon('next', 20)}</button>
        </div>
      </section>
    </main>
  </div>

  <div class="toolbar compact">
    <div class="group">
      {@render tools(parse('csNew'))}
      <div class="combo system">
        <span class="swatch model"></span>
        <select aria-label="Coordinate system"><option>1 - Global XYZ</option></select>
        {@render icon('chevron', 16)}
      </div>
      {@render tools(boxTools)}
    </div>
    <div class="group last snap">{@render tools(snapTools)}</div>
  </div>

  <footer class="status">
    <span class="grow"></span>
    <span class="blank"></span>
    <span class="cs">CS: Global XYZ</span>
    <span class="plane">Plane: XY</span>
    <span class="slot"></span>
    <span class="slot"></span>
    <span class="slot"></span>
    <svg viewBox="0 0 10 10" width="10" height="10"><path d="M8 0h2v2H8zM8 4h2v2H8zM8 8h2v2H8zM4 4h2v2H4zM4 8h2v2H4zM0 8h2v2H0z" fill="#b0b0b8" /></svg>
  </footer>
</div>

<style>
  :global(body) {
    margin: 0;
    overflow: hidden;
  }

  .window {
    display: flex;
    flex-direction: column;
    box-sizing: border-box;
    height: 100vh;
    overflow: hidden;
    border: 1px solid #0078d7;
    border-top: 0;
    background: #f7f7f7;
    color: #000;
    font: 11px/16px 'Noto Sans', 'Open Sans', sans-serif;
  }

  button,
  select,
  input {
    font: inherit;
    color: inherit;
    border: 0;
    padding: 0;
    margin: 0;
    background: none;
    outline: none;
  }

  svg {
    display: block;
    flex: none;
  }

  .titlebar {
    display: flex;
    align-items: center;
    flex: none;
    height: 31px;
    padding-left: 8px;
    background: #0078d7;
    color: #fff;
    font-family: 'Open Sans', sans-serif;
    font-size: 11px;
  }

  .title {
    flex: 1;
    margin-left: 5px;
  }

  .titlebar button {
    display: grid;
    place-items: center;
    width: 46px;
    height: 31px;
  }

  .menubar {
    display: flex;
    align-items: center;
    flex: none;
    height: 20px;
    padding-right: 1px;
  }

  .menu {
    margin-left: 8px;
    margin-right: 8px;
    white-space: nowrap;
  }

  .search {
    display: flex;
    align-items: center;
    margin-left: auto;
  }

  .triangle {
    border: 4px solid transparent;
    border-left: 5px solid #888;
    border-right: 0;
    margin-right: 3px;
  }

  .search input {
    width: 230px;
    height: 19px;
    margin-right: 4px;
    padding-left: 3px;
    box-sizing: border-box;
    background: #e8e8f2;
  }

  .search input::placeholder {
    color: #777;
    opacity: 1;
  }

  .company {
    margin-left: 139px;
    margin-right: 8px;
  }

  .mdi {
    width: 18px;
    display: grid;
    place-items: center;
  }

  .toolbar {
    display: flex;
    flex: none;
    height: 27px;
    border-top: 1px solid #e0e0e0;
  }

  .group {
    display: flex;
    align-items: center;
    gap: 2px;
    padding-right: 2px;
    padding-bottom: 1px;
    border-right: 1px solid #d8d8d8;
  }

  .group.last {
    flex: 1;
    border-right: 0;
  }

  .handle {
    width: 8px;
    height: 20px;
    background: radial-gradient(circle, #b8b8b8 1px, transparent 1px) center / 4px 4px repeat-y;
  }

  .tool {
    display: flex;
  }

  .tool button {
    display: grid;
    place-items: center;
    box-sizing: border-box;
    width: 24px;
    height: 24px;
  }

  .tool .drop {
    width: 12px;
  }

  .drop::after {
    content: '';
    border: 4px solid transparent;
    border-top-color: #333;
    border-bottom: 0;
  }

  .active button {
    background: #c5e1f7;
    border: 1px solid #90c8f6;
  }

  .sep {
    width: 1px;
    height: 18px;
    margin: 0 2px;
    background: #999;
  }

  .space {
    width: 5px;
  }

  .combo {
    display: flex;
    align-items: center;
    box-sizing: border-box;
    height: 21px;
    padding: 0 1px 0 5px;
    background: #e8e8f2;
  }

  .combo select {
    flex: 1;
    min-width: 0;
    appearance: none;
    margin-left: 5px;
  }

  .combo.case {
    width: 270px;
  }

  .combo.case select {
    height: 15px;
    padding-left: 6px;
    margin-left: 0;
    margin-right: -3px;
    border-left: 1px solid #fff;
  }

  .badge {
    width: 30px;
    margin-right: 5px;
    background: #cb6464;
    color: #fff;
    line-height: 13px;
    text-align: center;
  }

  .ds {
    width: 69px;
  }

  .combo.structure {
    width: 191px;
    margin-left: 2px;
  }

  .combo.objects {
    width: 262px;
    padding-left: 4px;
  }

  .combo.objects select {
    margin-left: 4px;
  }

  .combo.system {
    width: 132px;
  }

  .step {
    display: grid;
    place-items: center;
    width: 14px;
    height: 21px;
    background: #e8e8f2;
  }

  .step.off {
    background: #ccc;
  }

  .overflow {
    margin-left: auto;
    padding-right: 1px;
    font-size: 14px;
    color: #333;
  }

  .workspace {
    display: flex;
    flex: 1;
    min-height: 0;
  }

  .navigator {
    display: flex;
    flex-direction: column;
    flex: none;
    width: 296px;
    margin-left: 2px;
    margin-right: 5px;
    padding-top: 1px;
  }

  .panel-head {
    display: flex;
    align-items: center;
    flex: none;
    gap: 9px;
    height: 21px;
    padding: 0 6px 0 4px;
    background: #d8e6f2;
    color: #3a3a3a;
  }

  .materials .panel-head {
    padding-left: 6px;
  }

  .panel-head h2 {
    flex: 1;
    margin: 0;
    font-size: 12px;
    font-weight: 600;
  }

  .tree-box {
    display: flex;
    flex: 1;
    min-height: 0;
    border: 1px solid #c8c8d4;
    background: #fff;
  }

  ul {
    flex: 1;
    min-width: 0;
    margin: 0;
    padding: 1px 0 0 1px;
    overflow: hidden;
    list-style: none;
  }

  li {
    display: flex;
    align-items: center;
    gap: 4px;
    height: 18px;
    margin-left: 1px;
    white-space: nowrap;
  }

  li.root {
    margin-left: 3px;
  }

  li.bold {
    font-weight: 700;
  }

  .twist {
    width: 18px;
    height: 12px;
    padding-left: 2px;
    box-sizing: border-box;
    stroke: #a0a0a0;
    stroke-width: 1.6;
  }

  .twist.open {
    stroke: #444;
  }

  .vscroll {
    display: flex;
    flex-direction: column;
    align-items: center;
    flex: none;
    width: 16px;
    background: #f0f0f0;
  }

  .vscroll span,
  .hscroll span {
    display: grid;
    place-items: center;
    flex: none;
    width: 16px;
    height: 16px;
    stroke: #555;
    stroke-width: 1.8;
  }

  .vscroll path,
  .hscroll path {
    fill: none;
  }

  .vscroll .end {
    margin-top: auto;
  }

  .vscroll .thumb {
    width: 100%;
    height: 85%;
    background: #cdcdcd;
  }

  .nav-tabs {
    display: flex;
    align-items: flex-start;
    height: 26px;
    border: 1px solid #c8c8d4;
    border-top: 0;
    box-sizing: border-box;
  }

  .nav-tabs button {
    display: grid;
    place-items: center;
    box-sizing: border-box;
    width: 39px;
    height: 24px;
    background: #ececec;
    border-right: 1px solid #c8c8d4;
    border-bottom: 1px solid #c8c8d4;
  }

  .nav-tabs .on {
    height: 25px;
    background: #fff;
    border-bottom-color: #fff;
  }

  main {
    display: flex;
    flex-direction: column;
    flex: 1;
    min-width: 0;
  }

  .viewport {
    flex: 1;
    min-height: 0;
    background: #fff;
  }

  .viewport svg {
    width: 100%;
    height: 100%;
  }

  .axis {
    font-size: 11px;
  }

  .cube {
    stroke: #777;
    stroke-width: 1.8;
    fill: none;
    font-size: 12px;
    font-weight: 700;
  }

  .cube text {
    stroke: none;
  }

  .materials {
    display: flex;
    flex-direction: column;
    flex: none;
    padding-top: 5px;
  }

  .table-menu {
    display: flex;
    align-items: center;
    height: 21px;
  }

  .table-bar {
    height: 25px;
  }

  .table-box {
    display: flex;
    height: 107px;
    border: 1px solid #c8c8d4;
    border-right: 0;
  }

  .table-clip {
    flex: 1;
    min-width: 0;
    overflow: hidden;
  }

  table {
    width: 100%;
    min-width: 1117px;
    table-layout: fixed;
    border-collapse: separate;
    border-spacing: 0;
  }

  .c-no {
    width: 60px;
  }

  .c-name {
    width: 154px;
  }

  .c-type {
    width: 103px;
  }

  .c-model {
    width: 200px;
  }

  .c-val {
    width: 100px;
  }

  td,
  th {
    box-sizing: border-box;
    height: 16px;
    padding: 0 4px;
    border-right: 1px solid #d8d8d8;
    border-bottom: 1px solid #d8d8d8;
    background: #fff;
    font-weight: 400;
    line-height: 15px;
    white-space: nowrap;
    overflow: hidden;
  }

  .strip td {
    height: 9px;
    background: #e4e4e4;
    border-color: #fff;
  }

  .heads th {
    height: 33px;
    padding: 0;
    background: #f0f0f0;
    vertical-align: bottom;
    line-height: 13px;
  }

  .heads .unit {
    line-height: 16px;
  }

  th.no,
  .heads th.no {
    background: #e2e2e2;
    border-color: #fff;
  }

  sup {
    font-size: 9px;
    line-height: 0;
    vertical-align: 3px;
  }

  td.num {
    background: #fafaf4;
    text-align: right;
  }

  td.focused {
    outline: 1px dotted #000;
    outline-offset: -2px;
  }

  .swatch {
    display: inline-block;
    width: 11px;
    height: 11px;
    margin-right: 5px;
    vertical-align: -2px;
  }

  .steel {
    background: #e87830;
  }

  .model {
    background: #ccffff;
  }

  .hscroll {
    display: flex;
    align-items: center;
    height: 16px;
    margin-top: 1px;
    background: #f0f0f0;
  }

  .hscroll .thumb {
    width: 79%;
    height: 100%;
    background: #cdcdcd;
  }

  .hscroll .end {
    margin-left: auto;
  }

  .table-box .vscroll .thumb {
    height: 18px;
  }

  .table-box .end {
    margin-bottom: 16px;
  }

  .hscroll .end {
    margin-bottom: 0;
  }

  .table-tabs {
    display: flex;
    align-items: flex-start;
    height: 23px;
  }

  .pager {
    display: flex;
    align-items: center;
    gap: 2px;
    flex: none;
    height: 22px;
    width: 126px;
  }

  .pager span {
    flex: 1;
    text-align: center;
  }

  .tabs {
    display: flex;
    flex: 1;
    min-width: 0;
    overflow: hidden;
  }

  .tabs button {
    flex: none;
    box-sizing: border-box;
    min-width: 60px;
    height: 20px;
    padding: 0 7px;
    background: #ececec;
    border-right: 2px solid #c8c8d4;
    border-bottom: 1px solid #c8c8d4;
    white-space: nowrap;
  }

  .tabs .on {
    height: 22px;
    background: #fff;
    border-left: 1px solid #c8c8d4;
    border-right-width: 1px;
  }

  .tab-scroll {
    width: 14px;
    height: 20px;
    display: grid;
    place-items: center;
  }

  .compact {
    height: 25px;
    margin-right: 1px;
  }

  .compact .tool button {
    width: 22px;
    height: 22px;
  }

  .compact .tool .drop {
    width: 12px;
  }

  .compact svg {
    width: 18px;
    height: 18px;
  }

  .compact .group {
    border-right: 0;
    padding-left: 1px;
  }

  .compact .snap {
    justify-content: flex-end;
  }

  .status {
    display: flex;
    align-items: center;
    flex: none;
    height: 16px;
    margin: 0 3px;
    background: #e8e8f2;
  }

  .status span {
    box-sizing: border-box;
    height: 14px;
    padding-left: 4px;
    border-right: 1px solid #d0d0d8;
    line-height: 14px;
  }

  .status .grow {
    flex: 1;
  }

  .status .blank {
    width: 107px;
  }

  .status .cs {
    width: 206px;
  }

  .status .plane {
    width: 71px;
  }

  .status .slot {
    width: 76px;
  }
</style>
